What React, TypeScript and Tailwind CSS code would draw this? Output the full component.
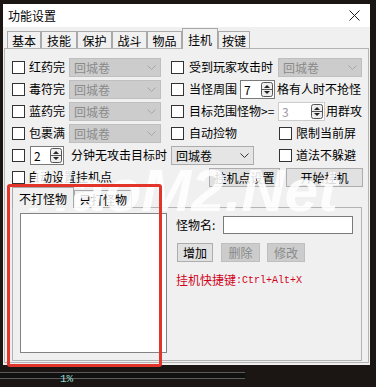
import React from "react";

const F = "font-['Noto_Sans_CJK_SC','Noto_Sans',sans-serif]";

function Check() {
  return <span className="w-[13px] h-[13px] border border-[#333333] bg-white shrink-0 block" />;
}

function Chevron({ color }: { color: string }) {
  return (
    <svg width="9" height="5" viewBox="0 0 9 5">
      <path d="M0.5 0.5 L4.5 4.5 L8.5 0.5" stroke={color} strokeWidth="1" fill="none" />
    </svg>
  );
}

function DisSelect({ w }: { w: string }) {
  return (
    <div className={`${w} h-[19px] bg-[#cccccc] border border-[#bfbfbf] flex items-center shrink-0`}>
      <span className="flex-1 pl-[4px] text-[#8a8a8a] leading-[17px]">回城卷</span>
      <span className="w-[17px] h-full flex items-center justify-center">
        <Chevron color="#a6a6a6" />
      </span>
    </div>
  );
}

function EnSelect({ w }: { w: string }) {
  return (
    <div className={`${w} h-[19px] bg-[#e5e5e5] border border-[#acacac] flex items-center shrink-0`}>
      <span className="flex-1 pl-[4px] text-black leading-[17px]">回城卷</span>
      <span className="w-[17px] h-full flex items-center justify-center">
        <Chevron color="#333333" />
      </span>
    </div>
  );
}

function SpinArrows() {
  return (
    <svg width="12" height="15" viewBox="0 0 12 15">
      <rect x="0.5" y="0.5" width="11" height="14" rx="2" fill="#eeeeee" stroke="#555555" />
      <line x1="1" y1="7.5" x2="11" y2="7.5" stroke="#555555" />
      <path d="M3 6 L6 3 L9 6 Z" fill="#222222" />
      <path d="M3 9 L6 12 L9 9 Z" fill="#222222" />
    </svg>
  );
}

function Spin({ w, v, dis }: { w: string; v: string; dis?: boolean }) {
  return (
    <div className={`${w} h-[19px] bg-white border ${dis ? "border-[#cccccc]" : "border-[#7a7a7a]"} flex items-center shrink-0`}>
      <span className={`flex-1 pl-[3px] leading-[17px] ${dis ? "text-[#9a9a9a]" : "text-black"}`}>{v}</span>
      <span className="pr-[1px] flex items-center">
        <SpinArrows />
      </span>
    </div>
  );
}

function Btn({ w, t, dis }: { w: string; t: string; dis?: boolean }) {
  return (
    <div
      className={`${w} h-[19px] border flex items-center justify-center shrink-0 leading-[17px] ${
        dis ? "bg-[#cccccc] border-[#bfbfbf] text-[#8a8a8a]" : "bg-[#e1e1e1] border-[#adadad] text-black"
      }`}
    >
      {t}
    </div>
  );
}

function Tab({ w, t, sel }: { w: string; t: string; sel?: boolean }) {
  return (
    <div
      className={`${w} ${
        sel ? "h-[21px] mb-[-1px] z-10 bg-[#f0f0f0]" : "h-[17px] bg-[#f0f0f0]"
      } border border-b-0 border-[#a9a9a9] flex items-center justify-center shrink-0 leading-[15px] relative`}
    >
      {t}
    </div>
  );
}

function Row({ children }: { children: React.ReactNode }) {
  return <div className="h-[22px] flex items-center">{children}</div>;
}

export default function App() {
  return (
    <div className={`w-[376px] h-[387px] bg-[#1b1613] relative overflow-hidden flex flex-col ${F} text-[12px] text-black`}>
      <div className="ml-[3px] mt-[4px] w-[367px] h-[361px] flex flex-col shrink-0">
        {/* title bar */}
        <div className="h-[23px] bg-white flex items-center justify-between pl-[5px] pr-[10px] shrink-0">
          <span className="leading-[16px]">功能设置</span>
          <svg width="11" height="11" viewBox="0 0 11 11">
            <path d="M0.5 0.5 L10.5 10.5 M10.5 0.5 L0.5 10.5" stroke="#222222" strokeWidth="1" />
          </svg>
        </div>
        {/* body */}
        <div className="flex-1 bg-[#f0f0f0] flex flex-col">
          <div className="h-[21px] flex items-end pl-[4px] shrink-0">
            <Tab w="w-[34px]" t="基本" />
            <Tab w="w-[36px]" t="技能" />
            <Tab w="w-[35px]" t="保护" />
            <Tab w="w-[35px]" t="战斗" />
            <Tab w="w-[35px]" t="物品" />
            <Tab w="w-[36px]" t="挂机" sel />
            <Tab w="w-[32px]" t="按键" />
          </div>
          <div className="ml-[1px] w-[365px] h-[315px] border border-[#b4b4b4] pl-[7px] pt-[7px] flex flex-col">
            <Row>
              <Check />
              <span className="ml-[4px] w-[36px]">红药完</span>
              <span className="ml-[4px]"><DisSelect w="w-[92px]" /></span>
              <span className="ml-[10px]"><Check /></span>
              <span className="ml-[5px] w-[89px]">受到玩家攻击时</span>
              <DisSelect w="w-[84px]" />
            </Row>
            <Row>
              <Check />
              <span className="ml-[4px] w-[36px]">毒符完</span>
              <span className="ml-[4px]"><DisSelect w="w-[92px]" /></span>
              <span className="ml-[10px]"><Check /></span>
              <span className="ml-[5px] w-[51px]">当怪周围</span>
              <Spin w="w-[35px]" v="7" />
              <span className="ml-[2px]">格有人时不抢怪</span>
            </Row>
            <Row>
              <Check />
              <span className="ml-[4px] w-[36px]">蓝药完</span>
              <span className="ml-[4px]"><DisSelect w="w-[92px]" /></span>
              <span className="ml-[10px]"><Check /></span>
              <span className="ml-[5px] w-[89px]">目标范围怪物&gt;=</span>
              <Spin w="w-[47px]" v="3" dis />
              <span className="ml-[1px]">用群攻</span>
            </Row>
            <Row>
              <Check />
              <span className="ml-[4px] w-[36px]">包裹满</span>
              <span className="ml-[4px]"><DisSelect w="w-[92px]" /></span>
              <span className="ml-[10px]"><Check /></span>
              <span className="ml-[5px] w-[90px]">自动捡物</span>
              <Check />
              <span className="ml-[4px]">限制当前屏</span>
            </Row>
            <Row>
              <Check />
              <span className="ml-[5px]"><Spin w="w-[34px]" v="2" /></span>
              <span className="ml-[7px] w-[96px]">分钟无攻击目标时</span>
              <span className="ml-[4px]"><EnSelect w="w-[83px]" /></span>
              <span className="ml-[25px]"><Check /></span>
              <span className="ml-[4px]">道法不躲避</span>
            </Row>
            <Row>
              <Check />
              <span className="ml-[3px] w-[84px]">自动设置挂机点</span>
              <span className="ml-[97px]"><Btn w="w-[71px]" t="挂机点设置" /></span>
              <span className="ml-[6px]"><Btn w="w-[77px]" t="开始挂机" /></span>
            </Row>
            {/* inner tab control */}
            <div className="mt-[2px] h-[17px] flex items-end shrink-0">
              <Tab w="w-[62px]" t="不打怪物" sel />
              <Tab w="w-[58px]" t="只打怪物" />
            </div>
            <div className="w-[350px] h-[154px] border border-[#b4b4b4] pl-[7px] pt-[5px] flex">
              <div className="w-[147px] h-[140px] bg-white border border-[#828282] shrink-0" />
              <div className="ml-[9px] flex flex-col">
                <div className="mt-[3px] h-[18px] flex items-center">
                  <span className="w-[47px]">怪物名:</span>
                  <div className="w-[130px] h-[18px] bg-white border border-[#7a7a7a]" />
                </div>
                <div className="mt-[9px] flex items-center">
                  <span className="ml-[1px]"><Btn w="w-[36px]" t="增加" /></span>
                  <span className="ml-[8px]"><Btn w="w-[39px]" t="删除" dis /></span>
                  <span className="ml-[7px]"><Btn w="w-[38px]" t="修改" dis /></span>
                </div>
                <div className="mt-[9px] h-[18px] flex items-center text-[#d0021b]">
                  <span>挂机快捷键</span>
                  <span className="font-['Liberation_Mono',monospace] text-[10px]">:Ctrl+Alt+X</span>
                </div>
              </div>
            </div>
          </div>
        </div>
      </div>
      {/* game background strip */}
      <div className="flex-1 relative">
        <div className="mt-[7px] ml-0 w-[245px] h-[7px] border-y border-[#5a5a5a] bg-[#101010]" />
        <span className="absolute left-[60px] top-[7px] text-[11px] leading-[14px] text-[#8fd8d0] font-['Liberation_Mono',monospace]">1%</span>
      </div>
      {/* watermark */}
      <div className="absolute left-[28px] top-[160px] text-[60px] leading-[62px] font-bold italic text-white/85 font-['Liberation_Sans',sans-serif] pointer-events-none">
        HaoM2.Net
      </div>
      {/* annotation box */}
      <div className="absolute left-[7px] top-[184px] w-[155px] h-[183px] border-[3px] border-[#e3342a] rounded-[3px] pointer-events-none" />
    </div>
  );
}
